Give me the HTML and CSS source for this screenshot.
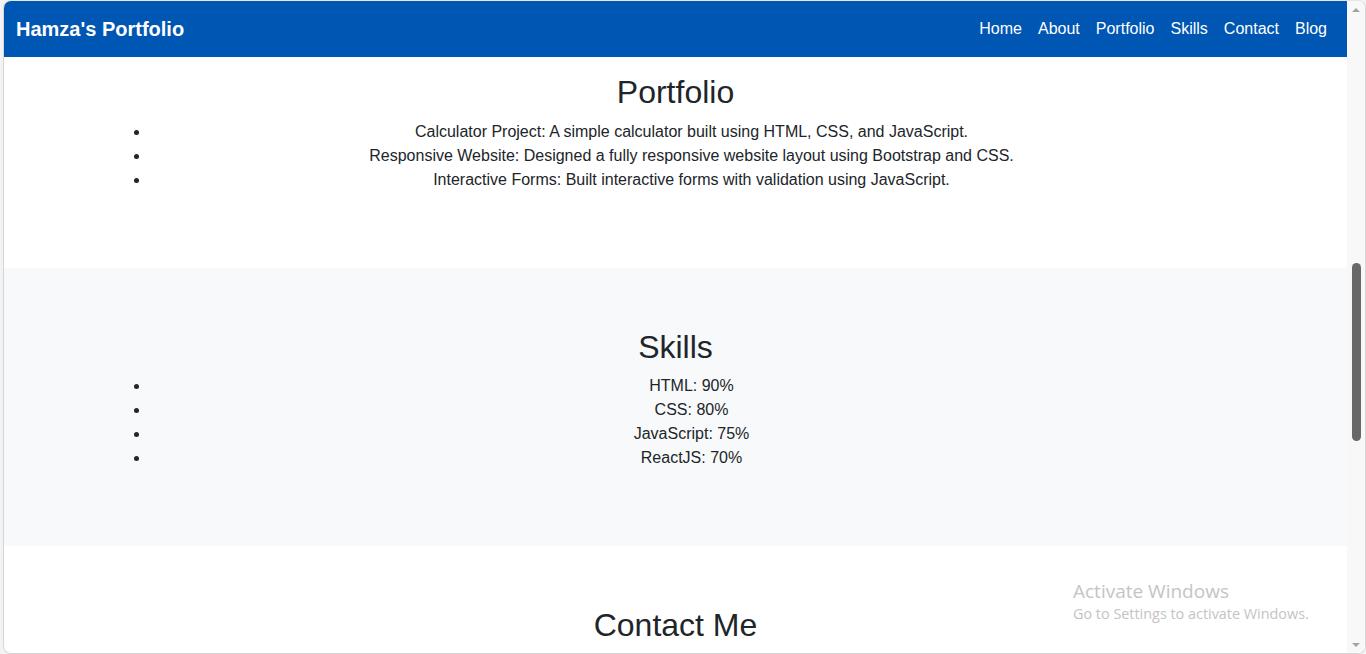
FILE: index.html
```html
<!DOCTYPE html>
<html lang="en">
<head>
<meta charset="utf-8">
<title>Hamza's Portfolio</title>
<link rel="stylesheet" href="styles.css">
</head>
<body>
<div class="window">
  <div class="viewport">
    <nav class="navbar">
      <a class="brand" href="#">Hamza's Portfolio</a>
      <ul class="nav-links">
        <li><a href="#">Home</a></li>
        <li><a href="#">About</a></li>
        <li><a href="#">Portfolio</a></li>
        <li><a href="#">Skills</a></li>
        <li><a href="#">Contact</a></li>
        <li><a href="#">Blog</a></li>
      </ul>
    </nav>
    <main class="content">
      <section class="section section-portfolio">
        <div class="container">
          <h2>Portfolio</h2>
          <ul class="list">
            <li>Calculator Project: A simple calculator built using HTML, CSS, and JavaScript.</li>
            <li>Responsive Website: Designed a fully responsive website layout using Bootstrap and CSS.</li>
            <li>Interactive Forms: Built interactive forms with validation using JavaScript.</li>
          </ul>
        </div>
      </section>
      <section class="section section-light">
        <div class="container">
          <h2>Skills</h2>
          <ul class="list">
            <li>HTML: 90%</li>
            <li>CSS: 80%</li>
            <li>JavaScript: 75%</li>
            <li>ReactJS: 70%</li>
          </ul>
        </div>
      </section>
      <section class="section">
        <div class="container">
          <h2>Contact Me</h2>
        </div>
      </section>
    </main>
    <div class="watermark">
      <div class="wm-title">Activate Windows</div>
      <div class="wm-sub">Go to Settings to activate Windows.</div>
    </div>
  </div>
  <div class="scrollbar">
    <div class="arrow arrow-up"></div>
    <div class="track"><div class="thumb"></div></div>
    <div class="arrow arrow-down"></div>
  </div>
</div>
</body>
</html>
```
FILE: styles.css
```css
* { box-sizing: border-box; }

html, body {
  margin: 0;
  height: 100%;
  overflow: hidden;
}

body {
  background: #f3f3f3;
  font-family: "Liberation Sans", Arial, sans-serif;
  font-size: 16px;
  line-height: 1.5;
  color: #212529;
}

.window {
  margin-left: 3px;
  width: 1363px;
  height: 654px;
  border: 1px solid #d6d6d6;
  border-top-color: #e6e6e6;
  border-radius: 8px;
  overflow: hidden;
  display: flex;
  background: #fff;
}

.viewport {
  position: relative;
  flex: 0 0 1343px;
  height: 100%;
  overflow: hidden;
  display: flex;
  flex-direction: column;
}

/* navbar */
.navbar {
  flex: 0 0 56px;
  background: #0056b3;
  display: flex;
  align-items: center;
  justify-content: space-between;
  padding: 0 12px;
}

.brand {
  color: #fff;
  font-size: 20px;
  font-weight: bold;
  text-decoration: none;
  line-height: 30px;
}

.nav-links {
  list-style: none;
  margin: 0;
  padding: 0;
  display: flex;
}

.nav-links a {
  display: block;
  color: #fff;
  text-decoration: none;
  padding: 8px;
  line-height: 24px;
}

/* content */
.content {
  flex: 1;
  overflow: hidden;
}

.section {
  padding: 60px 0;
  text-align: center;
}

.section-portfolio {
  padding-top: 16.4px;
}

.section-light {
  background: #f8f9fa;
}

.container {
  max-width: 1140px;
  margin: 0 auto;
  padding: 0 12px;
}

h2 {
  margin: 0 0 8px;
  font-size: 32px;
  font-weight: 400;
  line-height: 1.2;
}

.list {
  margin: 0 0 16px;
  padding-left: 32px;
}

/* windows watermark */
.watermark {
  position: absolute;
  left: 1069px;
  top: 577px;
  color: #c4c4c4;
  font-family: "Open Sans", "Noto Sans", sans-serif;
  pointer-events: none;
}

.wm-title {
  font-size: 19px;
  line-height: 26px;
}

.wm-sub {
  font-size: 14.4px;
  line-height: 20px;
}

/* scrollbar */
.scrollbar {
  flex: 1;
  background: #f8f8f8;
  display: flex;
  flex-direction: column;
  align-items: center;
}

.arrow {
  flex: 0 0 17px;
  width: 100%;
  display: flex;
  align-items: center;
  justify-content: center;
}

.arrow::before {
  content: "";
  border-left: 4px solid transparent;
  border-right: 4px solid transparent;
}

.arrow-up::before {
  border-bottom: 4px solid #a3a3a3;
}

.arrow-down::before {
  border-top: 4px solid #a3a3a3;
}

.track {
  flex: 1;
  width: 100%;
  padding-top: 245px;
  display: flex;
  justify-content: center;
}

.thumb {
  width: 9px;
  height: 178px;
  border-radius: 5px;
  background: #686868;
}
```
